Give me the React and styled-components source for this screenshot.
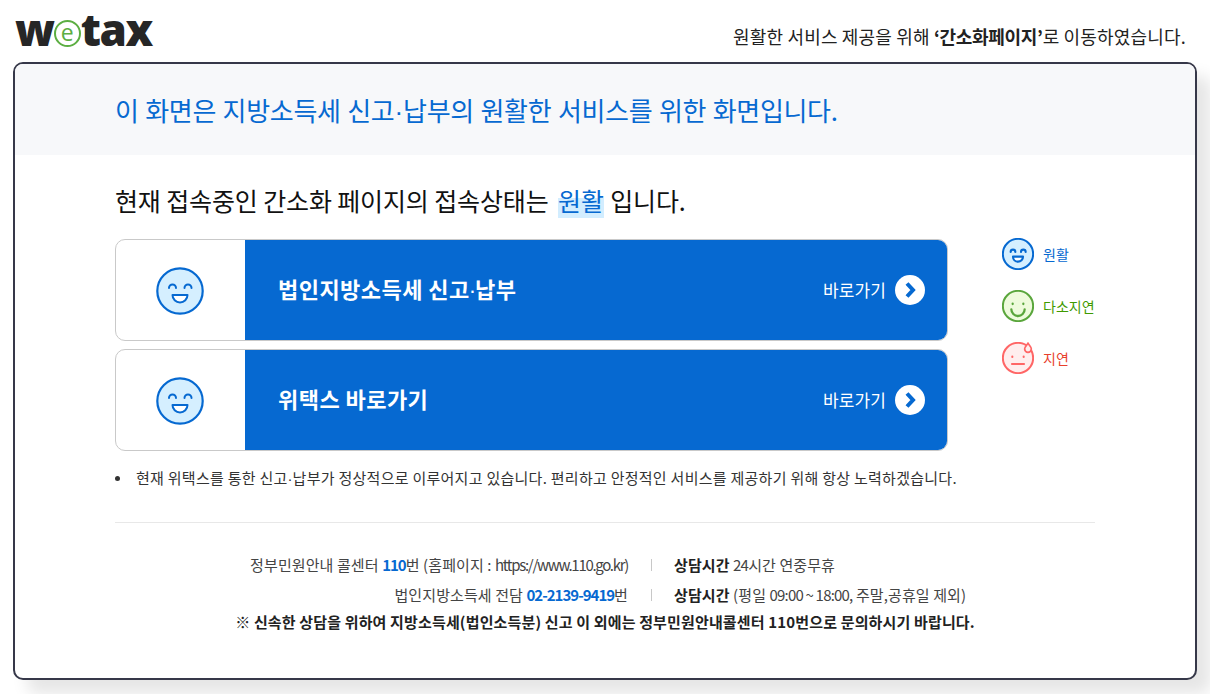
import React from "react";
import styled, { createGlobalStyle } from "styled-components";

const GlobalStyle = createGlobalStyle`
    html, body {
        margin: 0;
        padding: 0;
        background: #fff;
    }
    body {
        font-family: "Noto Sans CJK KR", "Noto Sans", sans-serif;
        color: #222;
        overflow: hidden;
    }
`;

const Page = styled.div`
    width: 1210px;
    height: 694px;
    overflow: hidden;
`;

const Header = styled.header`
    height: 62px;
    padding: 0 24px 0 15px;
    display: flex;
    justify-content: space-between;
    box-sizing: border-box;
`;

const Logo = styled.div`
    display: flex;
    align-items: center;
    height: 44px;
    margin-top: 7px;
    font-family: "Open Sans", sans-serif;
    font-weight: 800;
    font-size: 44px;
    line-height: 44px;
    letter-spacing: -1.4px;
    color: #262626;
`;

const LogoMark = styled.span`
    width: 27px;
    height: 27px;
    box-sizing: border-box;
    margin: 9px 0 0 0;
    border: 2px solid #5cae42;
    border-radius: 50%;
    display: flex;
    align-items: center;
    justify-content: center;
    font-weight: 400;
    font-size: 23px;
    line-height: 20px;
    padding-bottom: 3px;
    letter-spacing: 0;
    color: #5cae42;
    background: #fff;
`;

const Notice = styled.p`
    margin: 24px 0 0;
    font-size: 18px;
    line-height: 24px;
    letter-spacing: 0.18px;
    color: #222;

    b {
        font-weight: 700;
        letter-spacing: -0.3px;
    }
`;

const Card = styled.main`
    width: 1184px;
    height: 618px;
    margin-left: 13px;
    box-sizing: border-box;
    border: 2px solid #363849;
    border-radius: 10px;
    background: #fff;
    box-shadow: 14px 14px 16px rgba(0, 0, 0, 0.1);
    overflow: hidden;
`;

const Banner = styled.div`
    height: 91px;
    padding-left: 100px;
    background: #f7f8fa;
    display: flex;
    align-items: center;
    font-size: 26px;
    letter-spacing: -0.32px;
    word-spacing: 1.1px;
    color: #0669d1;
`;

const Body = styled.div`
    width: 980px;
    margin-left: 100px;
`;

const Status = styled.h2`
    margin: 27px 0 0;
    font-size: 25px;
    line-height: 36px;
    font-weight: 400;
    letter-spacing: -0.13px;
    color: #111;

    em {
        font-style: normal;
        color: #0669d1;
        background: linear-gradient(transparent 45%, #d2edff 45%);
        margin: 0 1px 0 4px;
    }
`;

const Columns = styled.div`
    display: flex;
    margin-top: 21px;
`;

const LinkList = styled.div`
    width: 833px;
    flex: none;
    display: flex;
    flex-direction: column;
    gap: 8px;
`;

const LinkRow = styled.a`
    display: flex;
    height: 102px;
    box-sizing: border-box;
    border: 1px solid #c9c9c9;
    border-radius: 10px;
    overflow: hidden;
    background: #fff;
`;

const FaceCell = styled.div`
    width: 129px;
    padding: 1px 2px 0 0;
    box-sizing: border-box;
    display: flex;
    align-items: center;
    justify-content: center;
`;

const LinkBody = styled.div`
    flex: 1;
    display: flex;
    align-items: center;
    justify-content: space-between;
    padding: 0 22px 0 33px;
    background: #0669d1;
    color: #fff;
`;

const LinkTitle = styled.strong`
    font-size: 22px;
    line-height: 28px;
    margin-top: -5px;
    font-weight: 700;
    letter-spacing: 0.45px;
`;

const LinkMore = styled.span`
    display: flex;
    align-items: center;
    gap: 9px;
    margin-top: -2px;
    font-size: 17px;
    letter-spacing: 0.1px;

    svg {
        margin-top: 2px;
    }
`;

const Dot = styled.span`
    font-family: "Liberation Sans", sans-serif;
    font-weight: 400;
    line-height: 0;
    letter-spacing: 0;
    margin: 0 ${(props) => props.$trim || 0}px;
`;

const Legend = styled.ul`
    list-style: none;
    margin: 0 0 0 54px;
    padding: 0;
    display: flex;
    flex-direction: column;
    gap: 22px;
`;

const LegendItem = styled.li`
    display: flex;
    align-items: center;
    gap: 9px;
    height: 30px;
    font-size: 14px;
    letter-spacing: 0;
    white-space: nowrap;
    color: ${(props) => props.$color};
`;

const Bullets = styled.ul`
    list-style: none;
    margin: 15px 0 0;
    padding: 0;
    font-size: 15px;
    line-height: 24px;
    letter-spacing: 0.27px;
    color: #333;
`;

const BulletItem = styled.li`
    display: flex;
    align-items: center;
    gap: 16px;

    &::before {
        content: "";
        width: 5px;
        height: 5px;
        border-radius: 50%;
        background: #333;
    }
`;

const Divider = styled.hr`
    border: 0;
    border-top: 1px solid #e8e8e8;
    margin: 32px 0 0;
`;

const Contact = styled.div`
    margin-top: 27px;
    font-size: 15px;
    letter-spacing: 0.1px;
    color: #444;

    b {
        color: #222;
    }
`;

const ContactRow = styled.div`
    display: grid;
    grid-template-columns: 513px 2px auto;
    column-gap: 22px;
    align-items: center;
    height: 30px;
    line-height: 30px;
`;

const ContactLeft = styled.span`
    justify-self: end;
    white-space: nowrap;

    b {
        color: #0669d1;
        letter-spacing: -1px;
    }
`;

const Url = styled.span`
    letter-spacing: -1.3px;
`;

const Time = styled.span`
    letter-spacing: -0.8px;
`;

const Sep = styled.i`
    justify-self: end;
    width: 1px;
    height: 12px;
    background: #c8c8c8;
`;

const ContactNote = styled.p`
    margin: 0;
    text-align: center;
    line-height: 23px;
    font-weight: 700;
    letter-spacing: 0.15px;
    color: #222;
`;

const faces = {
    good: { stroke: "#0669d1", fill: "#d5efff" },
    fair: { stroke: "#5aa63c", fill: "#eefbdc" },
    slow: { stroke: "#ff6666", fill: "#ffeeee" },
};

const Face = ({ type, size }) => {
    const { stroke, fill } = faces[type];
    const inner = size < 40 ? 3.2 : 2;
    return (
        <svg width={size} height={size} viewBox="0 0 48 48" fill="none">
            <circle cx="24" cy="24" r="22.7" fill={fill} stroke={stroke} strokeWidth={size < 40 ? 3 : 2.2} />
            {type === "good" && (
                <g stroke={stroke} strokeWidth={inner} strokeLinecap="round">
                    <path d="M13 21 a3.500 3.500 0 0 1 7 0" />
                    <path d="M28.500 21 a3.500 3.500 0 0 1 7 0" />
                    <path d="M16.500 28 h15 a7.500 7.500 0 0 1 -15 0 z" fill="#fff" strokeLinejoin="round" />
                </g>
            )}
            {type === "fair" && (
                <g stroke={stroke} strokeWidth="3.4" strokeLinecap="round">
                    <path d="M16 20.500 v.5" />
                    <path d="M32 20.500 v.5" />
                    <path d="M14 29 a10 10 0 0 0 20 0" />
                </g>
            )}
            {type === "slow" && (
                <g stroke={stroke} strokeWidth="3.2" strokeLinecap="round">
                    <path d="M15.500 22 v.5" />
                    <path d="M32.500 22 v.5" />
                    <path d="M15 33 h18" />
                    <path d="M39 2 c2 3 5 5.500 5 8.500 a5 5 0 0 1 -10 0 c0 -3 3 -5.500 5 -8.500 z" fill="#ffeeee" strokeWidth="2.6" />
                </g>
            )}
        </svg>
    );
};

const GoArrow = () => (
    <svg width="30" height="30" viewBox="0 0 30 30">
        <circle cx="15" cy="15" r="15" fill="#fff" />
        <path d="M12 8.500 L18 15 L12 21.500" fill="none" stroke="#0669d1" strokeWidth="4" strokeLinejoin="miter" />
    </svg>
);

const App = () => (
    <Page>
        <GlobalStyle />
        <Header>
            <Logo>
                w<LogoMark>e</LogoMark>tax
            </Logo>
            <Notice>
                원활한 서비스 제공을 위해 <b>‘간소화페이지’</b>로 이동하였습니다.
            </Notice>
        </Header>
        <Card>
            <Banner>
                <span>
                    이 화면은 지방소득세 신고<Dot>·</Dot>납부의 원활한 서비스를 위한 화면입니다.
                </span>
            </Banner>
            <Body>
                <Status>
                    현재 접속중인 간소화 페이지의 접속상태는 <em>원활</em> 입니다.
                </Status>
                <Columns>
                    <LinkList>
                        <LinkRow>
                            <FaceCell>
                                <Face type="good" size={48} />
                            </FaceCell>
                            <LinkBody>
                                <LinkTitle>
                                    법인지방소득세 신고<Dot $trim={-1}>·</Dot>납부
                                </LinkTitle>
                                <LinkMore>
                                    바로가기
                                    <GoArrow />
                                </LinkMore>
                            </LinkBody>
                        </LinkRow>
                        <LinkRow>
                            <FaceCell>
                                <Face type="good" size={48} />
                            </FaceCell>
                            <LinkBody>
                                <LinkTitle>위택스 바로가기</LinkTitle>
                                <LinkMore>
                                    바로가기
                                    <GoArrow />
                                </LinkMore>
                            </LinkBody>
                        </LinkRow>
                    </LinkList>
                    <Legend>
                        <LegendItem $color="#0669d1">
                            <Face type="good" size={32} />
                            원활
                        </LegendItem>
                        <LegendItem $color="#3f9a00">
                            <Face type="fair" size={32} />
                            다소지연
                        </LegendItem>
                        <LegendItem $color="#e8402c">
                            <Face type="slow" size={32} />
                            지연
                        </LegendItem>
                    </Legend>
                </Columns>
                <Bullets>
                    <BulletItem>
                        <span>
                            현재 위택스를 통한 신고<Dot>·</Dot>납부가 정상적으로 이루어지고 있습니다. 편리하고 안정적인 서비스를 제공하기 위해 항상 노력하겠습니다.
                        </span>
                    </BulletItem>
                </Bullets>
                <Divider />
                <Contact>
                    <ContactRow>
                        <ContactLeft>
                            정부민원안내 콜센터 <b>110</b>번 (홈페이지 : <Url>https://www.110.go.kr)</Url>
                        </ContactLeft>
                        <Sep />
                        <span>
                            <b>상담시간</b> <Time>24</Time>시간 연중무휴
                        </span>
                    </ContactRow>
                    <ContactRow>
                        <ContactLeft>
                            법인지방소득세 전담 <b>02-2139-9419</b>번
                        </ContactLeft>
                        <Sep />
                        <span>
                            <b>상담시간</b> (평일 <Time>09:00 ~ 18:00,</Time> 주말,공휴일 제외)
                        </span>
                    </ContactRow>
                    <ContactNote>※ 신속한 상담을 위하여 지방소득세(법인소득분) 신고 이 외에는 정부민원안내콜센터 110번으로 문의하시기 바랍니다.</ContactNote>
                </Contact>
            </Body>
        </Card>
    </Page>
);

export default App;
